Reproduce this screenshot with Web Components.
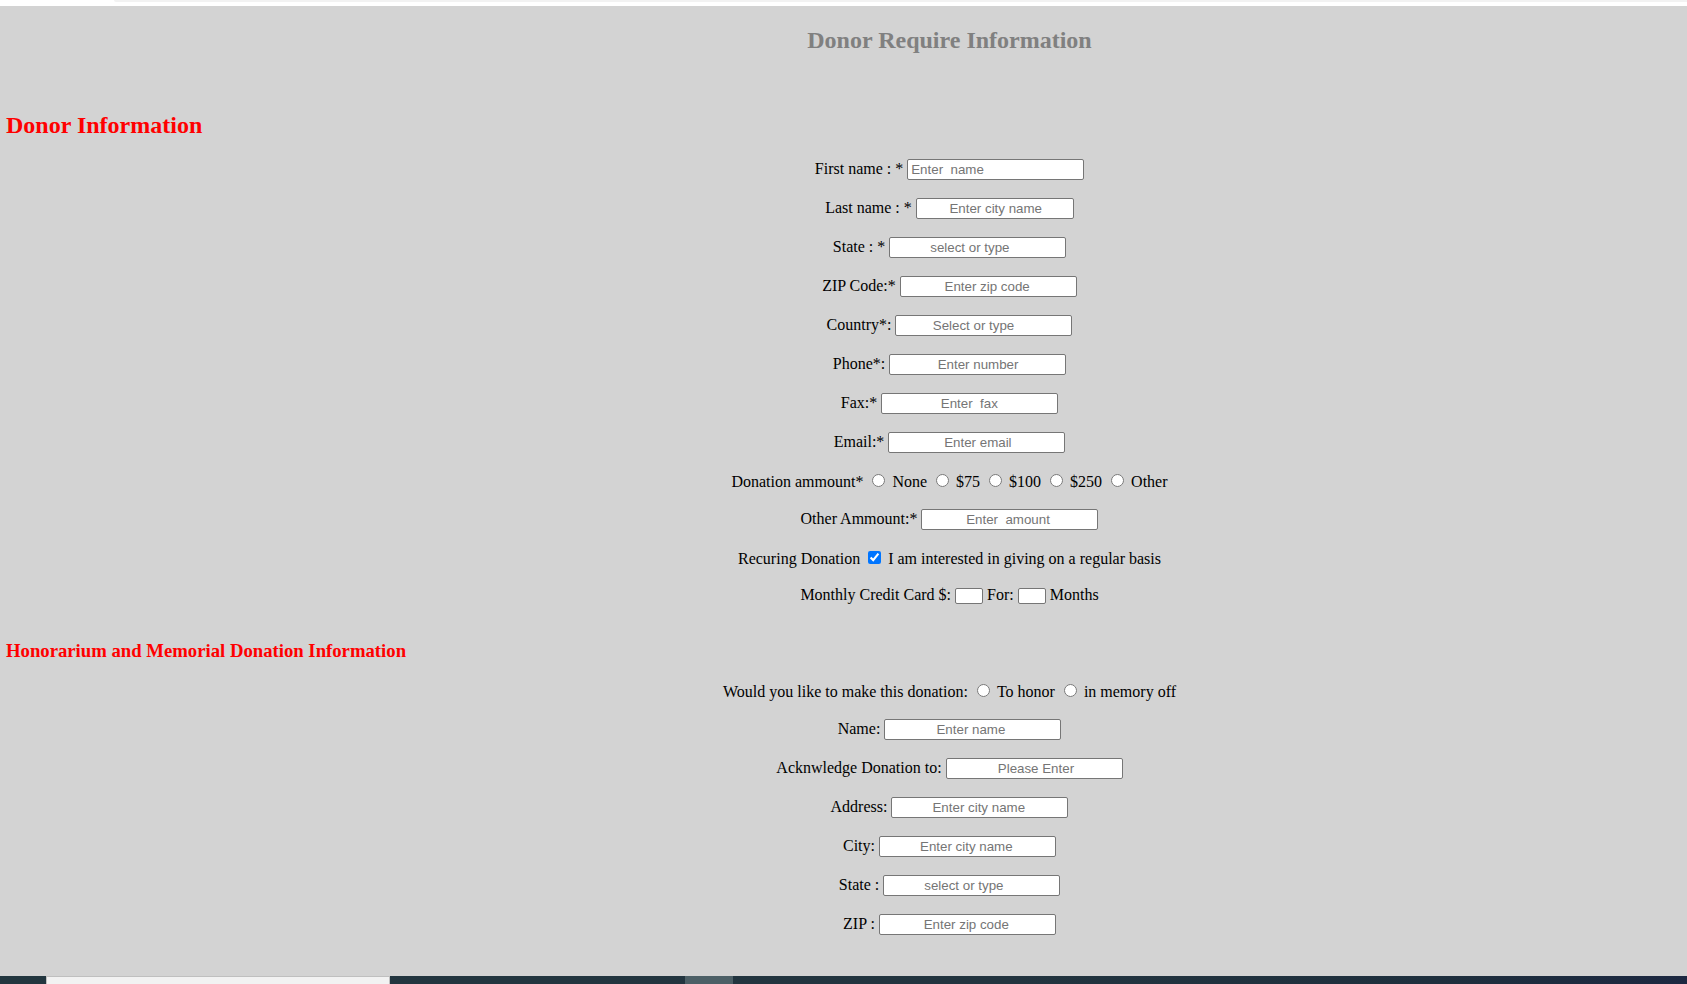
<!DOCTYPE html>
<html lang="en">
<head>
<meta charset="utf-8">
<title>Donor Information</title>
<style>
  body { margin: 0; font: 16px/18px "Liberation Serif", serif; color: #000; background: lightgray; }
</style>
</head>
<body>
<donor-page></donor-page>

<template id="page-template">
  <style>
    :host { display: flex; flex-direction: column; min-height: 100vh; }
    main { flex: 1; padding-bottom: 40px; }
    .title, form-rows { margin-left: 212px; }
    .title { margin-top: 21px; }
    .lead { margin-top: 58px; }
    form-rows { margin-top: 20px; }
    .honor { margin-top: 36px; }
  </style>
  <window-edge></window-edge>
  <main>
    <section-title class="title" tone="main">Donor Require Information</section-title>
    <section-title class="lead" tone="large">Donor Information</section-title>
    <form-rows>
      <text-field label="First name : *" hint="Enter  name"></text-field>
      <text-field label="Last name : *" hint="Enter city name" indent="8" short></text-field>
      <text-field label="State : *" hint="select or type" indent="10"></text-field>
      <text-field label="ZIP Code:*" hint="Enter zip code" indent="11"></text-field>
      <text-field label="Country*:" hint="Select or type" indent="9"></text-field>
      <text-field label="Phone*:" hint="Enter number" indent="12"></text-field>
      <text-field label="Fax:*" hint="Enter  fax" indent="15"></text-field>
      <text-field label="Email:*" hint="Enter email" indent="14"></text-field>
      <choice-group label="Donation ammount*" options="None|$75|$100|$250|Other"></choice-group>
      <text-field label="Other Ammount:*" hint="Enter  amount" indent="11"></text-field>
      <choice-group label="Recuring Donation" type="checkbox" checked options="I am interested in giving on a regular basis"></choice-group>
      <monthly-card></monthly-card>
    </form-rows>
    <section-title class="honor" tone="small">Honorarium and Memorial Donation Information</section-title>
    <form-rows>
      <choice-group label="Would you like to make this donation:" options="To honor|in memory off"></choice-group>
      <text-field label="Name:" hint="Enter name" indent="13"></text-field>
      <text-field label="Acknwledge Donation to:" hint="Please Enter" indent="13"></text-field>
      <text-field label="Address:" hint="Enter city name" indent="10"></text-field>
      <text-field label="City:" hint="Enter city name" indent="10"></text-field>
      <text-field label="State :" hint="select or type" indent="10"></text-field>
      <text-field label="ZIP :" hint="Enter zip code" indent="11"></text-field>
    </form-rows>
  </main>
  <task-strip></task-strip>
</template>

<script>
  const rowStyle = `
    :host { display: flex; justify-content: center; align-items: baseline; gap: 4px; white-space: nowrap; }
    input[type=text] {
      box-sizing: border-box; width: 177px; height: 21px; margin: 0; padding: 1px 3px;
      border: 1px solid #767676; border-radius: 2px; background: #fff; color: #000;
      font-family: "Liberation Sans", Arial, sans-serif;
    }
    input::placeholder { color: #757575; }`;

  const define = (name, render) => customElements.define(name, class extends HTMLElement {
    connectedCallback() {
      if (!this.shadowRoot) this.attachShadow({ mode: 'open' }).innerHTML = render(this);
    }
  });

  define('window-edge', () => `
    <style>
      :host { display: block; height: 6px; background: #fff; }
      div { height: 2px; margin-left: 114px; background: #f2f2f2; border-bottom-left-radius: 2px; }
    </style><div></div>`);

  define('task-strip', () => `
    <style>
      :host { display: flex; height: 8px; background: linear-gradient(90deg, #22363f, #22343f 60%, #1e2f3d 85%, #1c2841); }
      .search { box-sizing: border-box; width: 344px; margin-left: 46px; background: #f2f2f2; border: 1px solid #bfbfbf; border-bottom: 0; }
      .active { width: 48px; margin-left: 295px; background: #4c5f66; }
    </style><div class="search"></div><div class="active"></div>`);

  define('section-title', el => {
    const tag = { main: 'h1', large: 'h2', small: 'h3' }[el.getAttribute('tone')];
    return `
    <style>
      :host { display: block; }
      h1, h2, h3 { margin: 0; font-weight: bold; }
      h1, h2 { font-size: 24px; line-height: 27px; }
      h1 { text-align: center; color: gray; }
      h2, h3 { margin-left: 6px; color: #f00; }
      h3 { line-height: 21px; }
    </style><${tag}><slot></slot></${tag}>`;
  });

  define('form-rows', () => `
    <style>:host { display: flex; flex-direction: column; gap: 18px; }</style><slot></slot>`);

  define('text-field', el => `
    <style>${rowStyle}
      :host([short]) input { width: 158px; }
    </style>
    <label for="field">${el.getAttribute('label')}</label>
    <input id="field" type="text" placeholder="${' '.repeat(+el.getAttribute('indent')) + el.getAttribute('hint')}">`);

  define('choice-group', el => {
    const type = el.getAttribute('type') || 'radio';
    const options = el.getAttribute('options').split('|').map((text, i) => `
      <input type="${type}" name="choice" id="c${i}"${el.hasAttribute('checked') ? ' checked' : ''}>
      <label for="c${i}">${text}</label>`).join('');
    return `
    <style>${rowStyle}
      input { width: 13px; height: 13px; margin: 3px 3px 0 5px; }
      input[type=checkbox] { margin-left: 4px; }
    </style><span>${el.getAttribute('label')}</span>${options}`;
  });

  define('monthly-card', () => `
    <style>${rowStyle}
      input[type=text] { width: 28px; height: 16px; }
    </style>
    <label for="amount">Monthly Credit Card $:</label><input id="amount" type="text">
    <label for="months">For:</label><input id="months" type="text" aria-describedby="unit">
    <span id="unit">Months</span>`);

  customElements.define('donor-page', class extends HTMLElement {
    constructor() {
      super();
      this.attachShadow({ mode: 'open' })
        .append(document.getElementById('page-template').content.cloneNode(true));
    }
  });
</script>
</body>
</html>
